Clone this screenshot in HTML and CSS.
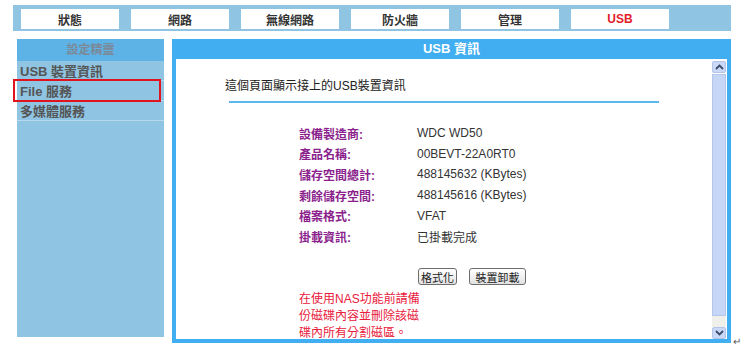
FILE: index.html
```html
<!DOCTYPE html>
<html lang="zh-Hant">
<head>
    <meta charset="UTF-8">
    <meta name="viewport" content="width=device-width, initial-scale=1.0">
    <title>USB 資訊</title>
    <link rel="stylesheet" href="styles.css">
</head>
<body>
    <div id="page">
        <div class="topbar">
            <a class="tab">狀態</a>
            <a class="tab">網路</a>
            <a class="tab">無線網路</a>
            <a class="tab">防火牆</a>
            <a class="tab">管理</a>
            <a class="tab active">USB</a>
        </div>
        <div class="main-row">
            <div class="sidebar">
                <p class="side-title">設定精靈</p>
                <a class="side-item">USB 裝置資訊</a>
                <a class="side-item selected">File 服務</a>
                <a class="side-item">多媒體服務</a>
            </div>
            <div class="panel">
                <p class="panel-title">USB 資訊</p>
                <div class="panel-body">
                    <div class="content">
                        <p class="intro">這個頁面顯示接上的USB裝置資訊</p>
                        <div class="rule"></div>
                        <div class="info">
                            <span class="label">設備製造商:</span><span class="value">WDC WD50</span>
                            <span class="label">產品名稱:</span><span class="value">00BEVT-22A0RT0</span>
                            <span class="label">儲存空間總計:</span><span class="value">488145632 (KBytes)</span>
                            <span class="label">剩餘儲存空間:</span><span class="value">488145616 (KBytes)</span>
                            <span class="label">檔案格式:</span><span class="value">VFAT</span>
                            <span class="label">掛載資訊:</span><span class="value">已掛載完成</span>
                        </div>
                        <div class="actions">
                            <button class="btn btn-format">格式化</button>
                            <button class="btn btn-eject">裝置卸載</button>
                        </div>
                        <p class="note">在使用NAS功能前請備份磁碟內容並刪除該磁碟內所有分割磁區。</p>
                    </div>
                    <div class="scrollbar">
                        <div class="sb-btn">
                            <svg width="9" height="6" viewBox="0 0 9 6"><path d="M1 5 L4.5 1.5 L8 5" fill="none" stroke="#3b4a6b" stroke-width="1.8"/></svg>
                        </div>
                        <div class="sb-thumb"></div>
                        <div class="sb-track"></div>
                        <div class="sb-btn">
                            <svg width="9" height="6" viewBox="0 0 9 6"><path d="M1 1 L4.5 4.5 L8 1" fill="none" stroke="#3b4a6b" stroke-width="1.8"/></svg>
                        </div>
                    </div>
                </div>
            </div>
            <span class="para-mark">↵</span>
        </div>
    </div>
</body>
</html>
```

FILE: styles.css
```css
*{
    margin: 0;
    padding: 0;
    box-sizing: border-box;
}
body{
    background-color: white;
    font-family: "Liberation Sans", "Noto Sans CJK TC", sans-serif;
    font-size: 12px;
    color: #222;
}
#page{
    width: 745px;
    height: 351px;
    padding: 5px 0 0 13px;
}
.topbar{
    width: 718px;
    height: 26px;
    padding: 4px 0 2px 8px;
    display: flex;
    gap: 12px;
    background-color: #8fc4e3;
}
.tab{
    width: 98px;
    height: 20px;
    display: flex;
    align-items: center;
    justify-content: center;
    background-color: white;
    font-weight: bold;
    font-size: 12px;
    color: #333;
}
.tab.active{
    color: #e3202c;
}
.main-row{
    display: flex;
    align-items: flex-start;
    margin-top: 8px;
    padding-left: 4px;
}
.sidebar{
    width: 147px;
    height: 298px;
    background-color: #8fc5e3;
}
.side-title{
    height: 22px;
    line-height: 22px;
    text-align: center;
    background-color: #5db3e6;
    color: #7c8896;
    font-weight: bold;
    font-size: 12px;
}
.side-item{
    display: block;
    position: relative;
    height: 20px;
    line-height: 21px;
    padding-left: 3px;
    font-weight: bold;
    font-size: 13px;
    color: #555;
    border-bottom: 1px solid rgba(255, 255, 255, 0.35);
}
.side-item.selected::after{
    content: "";
    position: absolute;
    left: -4px;
    right: 3px;
    top: -2px;
    bottom: -2px;
    border: 2px solid #e0141e;
}
.panel{
    width: 559px;
    height: 304px;
    margin-left: 8px;
    border: 4px solid #40aef0;
    border-top: none;
    display: flex;
    flex-direction: column;
}
.panel-title{
    height: 20px;
    line-height: 20px;
    margin: 0 -4px;
    text-align: center;
    background-color: #40aef0;
    color: white;
    font-weight: bold;
    font-size: 13px;
}
.panel-body{
    flex: 1;
    display: flex;
    background-color: white;
    overflow: hidden;
}
.content{
    flex: 1;
    padding: 19px 0 0 49px;
}
.intro{
    line-height: 16px;
    color: #222;
}
.rule{
    width: 430px;
    height: 2px;
    margin: 7px 0 0 4px;
    background-color: #5ab8ee;
}
.info{
    display: grid;
    grid-template-columns: 118px auto;
    grid-auto-rows: 20.6px;
    align-items: center;
    margin: 20px 0 0 74px;
}
.label{
    font-weight: bold;
    color: #8b1f8d;
}
.value{
    color: #333;
}
.actions{
    display: flex;
    gap: 12px;
    margin: 21px 0 0 193px;
}
.btn{
    height: 17px;
    padding: 0;
    font-family: "Liberation Sans", "Noto Sans CJK TC", sans-serif;
    font-size: 11px;
    color: #222;
    background: linear-gradient(#ffffff, #e2e2e2);
    border: 1px solid #6d6d6d;
    border-radius: 3px;
}
.btn-format{
    width: 39px;
}
.btn-eject{
    width: 57px;
}
.note{
    width: 122px;
    margin: 6px 0 0 74px;
    line-height: 17px;
    color: #e8203c;
}
.scrollbar{
    width: 14px;
    margin: 2px 1px 0 0;
    display: flex;
    flex-direction: column;
}
.sb-btn{
    height: 12px;
    display: flex;
    align-items: center;
    justify-content: center;
    background-color: #c9d8f6;
    border: 1px solid #b3c4e8;
    border-radius: 2px;
}
.sb-thumb{
    flex: 1;
    margin-top: 1px;
    background-color: #c6d6f7;
    border: 1px solid #b5c6ea;
}
.sb-track{
    height: 11px;
    background-color: #f0f0ea;
}
.para-mark{
    align-self: flex-end;
    margin: 0 0 -4px 2px;
    font-size: 10px;
    color: #555;
}
```
